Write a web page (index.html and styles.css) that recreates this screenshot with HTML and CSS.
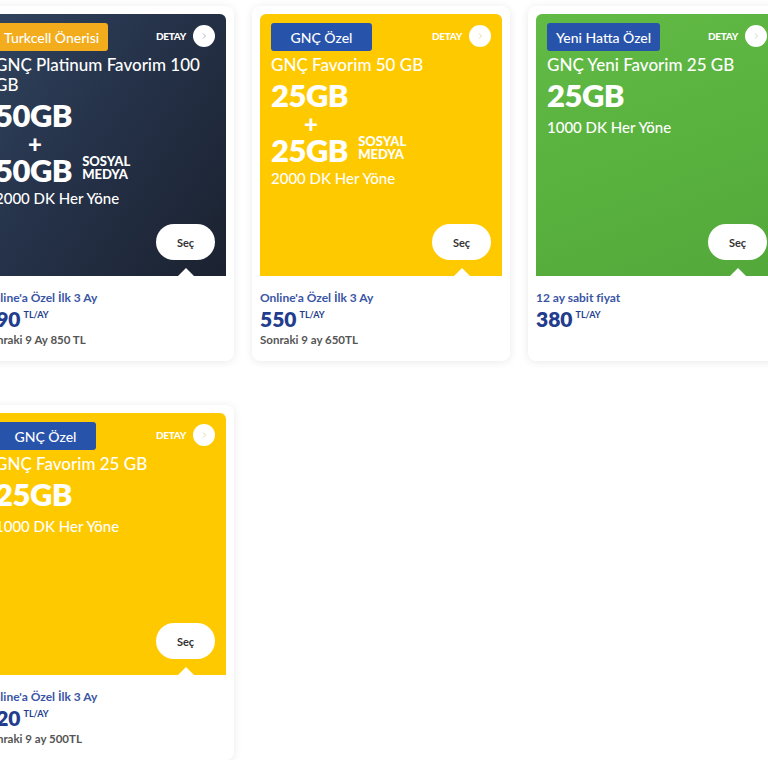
FILE: index.html
```html
<!DOCTYPE html>
<html lang="tr">
<head>
<meta charset="utf-8">
<title>Paketler</title>
<link rel="stylesheet" href="styles.css">
</head>
<body>
<div class="grid">

  <div class="card">
    <div class="hero hero-dark">
      <div class="top">
        <span class="badge badge-orange">Turkcell Önerisi</span>
        <span class="detay">DETAY <span class="circle"><svg width="8" height="8" viewBox="0 0 8 8"><path d="M3 1.5 L5.5 4 L3 6.5" fill="none" stroke="#b9b9b9" stroke-width="1"/></svg></span></span>
      </div>
      <div class="title">GNÇ Platinum Favorim 100 GB</div>
      <div class="gb">50GB</div>
      <div class="plus">+</div>
      <div class="gb-row"><span class="gb">50GB</span><span class="social">SOSYAL<br>MEDYA</span></div>
      <div class="min">2000 DK Her Yöne</div>
      <div class="btn-wrap"><span class="sec">Seç</span></div>
    </div>
    <div class="info">
      <div class="promo">Online'a Özel İlk 3 Ay</div>
      <div class="price">490<sup>TL/AY</sup></div>
      <div class="later">Sonraki 9 Ay 850 TL</div>
    </div>
  </div>

  <div class="card">
    <div class="hero hero-yellow">
      <div class="top">
        <span class="badge badge-blue">GNÇ Özel</span>
        <span class="detay">DETAY <span class="circle"><svg width="8" height="8" viewBox="0 0 8 8"><path d="M3 1.5 L5.5 4 L3 6.5" fill="none" stroke="#e6d9a8" stroke-width="1"/></svg></span></span>
      </div>
      <div class="title">GNÇ Favorim 50 GB</div>
      <div class="gb">25GB</div>
      <div class="plus">+</div>
      <div class="gb-row"><span class="gb">25GB</span><span class="social">SOSYAL<br>MEDYA</span></div>
      <div class="min">2000 DK Her Yöne</div>
      <div class="btn-wrap"><span class="sec">Seç</span></div>
    </div>
    <div class="info">
      <div class="promo">Online'a Özel İlk 3 Ay</div>
      <div class="price">550<sup>TL/AY</sup></div>
      <div class="later">Sonraki 9 ay 650TL</div>
    </div>
  </div>

  <div class="card">
    <div class="hero hero-green">
      <div class="top">
        <span class="badge badge-blue">Yeni Hatta Özel</span>
        <span class="detay">DETAY <span class="circle"><svg width="8" height="8" viewBox="0 0 8 8"><path d="M3 1.5 L5.5 4 L3 6.5" fill="none" stroke="#c5dfbb" stroke-width="1"/></svg></span></span>
      </div>
      <div class="title">GNÇ Yeni Favorim 25 GB</div>
      <div class="gb">25GB</div>
      <div class="min">1000 DK Her Yöne</div>
      <div class="btn-wrap"><span class="sec">Seç</span></div>
    </div>
    <div class="info">
      <div class="promo">12 ay sabit fiyat</div>
      <div class="price">380<sup>TL/AY</sup></div>
    </div>
  </div>

  <div class="card">
    <div class="hero hero-yellow">
      <div class="top">
        <span class="badge badge-blue">GNÇ Özel</span>
        <span class="detay">DETAY <span class="circle"><svg width="8" height="8" viewBox="0 0 8 8"><path d="M3 1.5 L5.5 4 L3 6.5" fill="none" stroke="#e6d9a8" stroke-width="1"/></svg></span></span>
      </div>
      <div class="title">GNÇ Favorim 25 GB</div>
      <div class="gb">25GB</div>
      <div class="min">1000 DK Her Yöne</div>
      <div class="btn-wrap"><span class="sec">Seç</span></div>
    </div>
    <div class="info">
      <div class="promo">Online'a Özel İlk 3 Ay</div>
      <div class="price">420<sup>TL/AY</sup></div>
      <div class="later">Sonraki 9 ay 500TL</div>
    </div>
  </div>

</div>
</body>
</html>
```

FILE: styles.css
```css
html, body {
  margin: 0;
  padding: 0;
  overflow: hidden;
  background: #ffffff;
  font-family: "Lato", "Noto Sans", sans-serif;
}

.grid {
  display: grid;
  grid-template-columns: repeat(3, 258px);
  column-gap: 18px;
  row-gap: 44px;
  margin-left: -24px;
  padding-top: 6px;
  width: 810px;
}

.card {
  background: #fff;
  border-radius: 8px;
  box-shadow: 0 1px 8px rgba(0, 0, 0, 0.09);
  padding: 8px 8px 13px;
  display: flex;
  flex-direction: column;
}

.hero {
  position: relative;
  height: 262px;
  box-sizing: border-box;
  border-radius: 6px 6px 0 0;
  padding: 9px 11px 16px;
  display: flex;
  flex-direction: column;
  color: #fff;
}

.hero-dark {
  background: linear-gradient(125deg, #31445f 0%, #253249 45%, #1b2230 100%);
}

.hero-yellow {
  background: #ffc900;
}

.hero-green {
  background: linear-gradient(160deg, #62bb45 0%, #58b03d 60%, #53a83a 100%);
}

.top {
  display: flex;
  align-items: center;
  justify-content: space-between;
  height: 28px;
}

.badge {
  min-width: 101px;
  height: 28px;
  box-sizing: border-box;
  padding: 0 9px;
  border-radius: 3px;
  display: inline-flex;
  align-items: center;
  justify-content: center;
  font-size: 14px;
  font-weight: 500;
  color: #fff;
}

.badge-blue {
  background: #2753ab;
}

.badge-orange {
  background: #f2ac1c;
}

.detay {
  display: inline-flex;
  align-items: center;
  gap: 7px;
  font-size: 10px;
  font-weight: 900;
  letter-spacing: -0.3px;
  margin-top: -3px;
}

.circle {
  width: 22px;
  height: 22px;
  border-radius: 50%;
  background: #fff;
  display: inline-flex;
  align-items: center;
  justify-content: center;
}

.title {
  font-size: 17px;
  line-height: 20px;
  font-weight: 500;
  margin-top: 4px;
}

.gb {
  font-size: 31px;
  line-height: 32px;
  font-weight: 800;
  letter-spacing: -0.5px;
  margin-top: 4px;
}

.gb-row .gb {
  margin-top: 0;
}

.plus {
  width: 80px;
  text-align: center;
  font-size: 24px;
  line-height: 18px;
  font-weight: 900;
  margin-top: 4px;
}

.gb-row {
  display: flex;
  align-items: flex-start;
  gap: 10px;
  margin-top: 1px;
}

.social {
  font-size: 13px;
  line-height: 13px;
  font-weight: 900;
  margin-top: 1px;
}

.min {
  font-size: 15px;
  line-height: 20px;
  font-weight: 500;
  margin-top: 6px;
}

.gb-row + .min {
  margin-top: 2px;
}

.btn-wrap {
  margin-top: auto;
  display: flex;
  justify-content: flex-end;
  position: relative;
}

.sec {
  width: 59px;
  height: 36px;
  border-radius: 18px;
  background: #fff;
  color: #333;
  font-size: 11px;
  font-weight: 700;
  display: flex;
  align-items: center;
  justify-content: center;
  position: relative;
}

.sec::after {
  content: "";
  position: absolute;
  left: 50%;
  bottom: -16px;
  margin-left: -8px;
  border-left: 8px solid transparent;
  border-right: 8px solid transparent;
  border-bottom: 8px solid #fff;
}

.info {
  padding-top: 14px;
}

.promo {
  font-size: 12px;
  font-weight: 700;
  color: #3a55a4;
  line-height: 16px;
}

.price {
  font-size: 21px;
  font-weight: 800;
  color: #233d8e;
  line-height: 24px;
  margin-top: 1px;
}

.price sup {
  font-size: 9px;
  font-weight: 700;
  margin-left: 3px;
  vertical-align: 9px;
  line-height: 0;
}

.later {
  font-size: 11.5px;
  font-weight: 700;
  color: #555;
  line-height: 16px;
  margin-top: 1px;
}
```
